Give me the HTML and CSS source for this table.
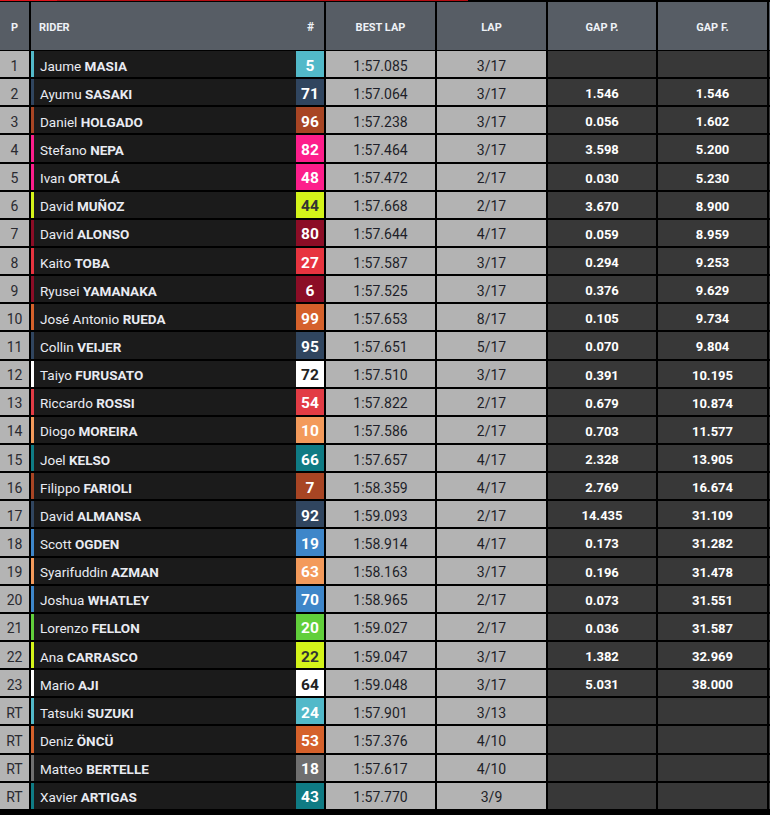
FILE: index.html
```html
<!DOCTYPE html>
<html>
<head>
<meta charset="utf-8">
<link rel="stylesheet" href="styles.css">
</head>
<body>
<div class="board">
  <div class="topline"><span class="seg-a"></span><span class="seg-b"></span></div>
  <div class="row head">
    <div class="c pos">P</div>
    <div class="c hrider"><span class="label">RIDER</span><span class="hash">#</span></div>
    <div class="c">BEST LAP</div>
    <div class="c">LAP</div>
    <div class="c">GAP P.</div>
    <div class="c">GAP F.</div>
    <div class="c"></div>
  </div>
  <div class="rows">
    <div class="row"><div class="c pos">1</div><div class="c rider cyan"><span class="name">Jaume <b>MASIA</b></span><span class="num">5</span></div><div class="c lt">1:57.085</div><div class="c lt">3/17</div><div class="c gp"></div><div class="c gp"></div><div class="c gp"></div></div>
    <div class="row"><div class="c pos">2</div><div class="c rider navy"><span class="name">Ayumu <b>SASAKI</b></span><span class="num">71</span></div><div class="c lt">1:57.064</div><div class="c lt">3/17</div><div class="c gp">1.546</div><div class="c gp">1.546</div><div class="c gp"></div></div>
    <div class="row"><div class="c pos">3</div><div class="c rider rust"><span class="name">Daniel <b>HOLGADO</b></span><span class="num">96</span></div><div class="c lt">1:57.238</div><div class="c lt">3/17</div><div class="c gp">0.056</div><div class="c gp">1.602</div><div class="c gp"></div></div>
    <div class="row"><div class="c pos">4</div><div class="c rider pink"><span class="name">Stefano <b>NEPA</b></span><span class="num">82</span></div><div class="c lt">1:57.464</div><div class="c lt">3/17</div><div class="c gp">3.598</div><div class="c gp">5.200</div><div class="c gp"></div></div>
    <div class="row"><div class="c pos">5</div><div class="c rider pink"><span class="name">Ivan <b>ORTOLÁ</b></span><span class="num">48</span></div><div class="c lt">1:57.472</div><div class="c lt">2/17</div><div class="c gp">0.030</div><div class="c gp">5.230</div><div class="c gp"></div></div>
    <div class="row"><div class="c pos">6</div><div class="c rider lime"><span class="name">David <b>MUÑOZ</b></span><span class="num">44</span></div><div class="c lt">1:57.668</div><div class="c lt">2/17</div><div class="c gp">3.670</div><div class="c gp">8.900</div><div class="c gp"></div></div>
    <div class="row"><div class="c pos">7</div><div class="c rider wine"><span class="name">David <b>ALONSO</b></span><span class="num">80</span></div><div class="c lt">1:57.644</div><div class="c lt">4/17</div><div class="c gp">0.059</div><div class="c gp">8.959</div><div class="c gp"></div></div>
    <div class="row"><div class="c pos">8</div><div class="c rider red"><span class="name">Kaito <b>TOBA</b></span><span class="num">27</span></div><div class="c lt">1:57.587</div><div class="c lt">3/17</div><div class="c gp">0.294</div><div class="c gp">9.253</div><div class="c gp"></div></div>
    <div class="row"><div class="c pos">9</div><div class="c rider wine"><span class="name">Ryusei <b>YAMANAKA</b></span><span class="num">6</span></div><div class="c lt">1:57.525</div><div class="c lt">3/17</div><div class="c gp">0.376</div><div class="c gp">9.629</div><div class="c gp"></div></div>
    <div class="row"><div class="c pos">10</div><div class="c rider orange"><span class="name">José Antonio <b>RUEDA</b></span><span class="num">99</span></div><div class="c lt">1:57.653</div><div class="c lt">8/17</div><div class="c gp">0.105</div><div class="c gp">9.734</div><div class="c gp"></div></div>
    <div class="row"><div class="c pos">11</div><div class="c rider navy"><span class="name">Collin <b>VEIJER</b></span><span class="num">95</span></div><div class="c lt">1:57.651</div><div class="c lt">5/17</div><div class="c gp">0.070</div><div class="c gp">9.804</div><div class="c gp"></div></div>
    <div class="row"><div class="c pos">12</div><div class="c rider white"><span class="name">Taiyo <b>FURUSATO</b></span><span class="num">72</span></div><div class="c lt">1:57.510</div><div class="c lt">3/17</div><div class="c gp">0.391</div><div class="c gp">10.195</div><div class="c gp"></div></div>
    <div class="row"><div class="c pos">13</div><div class="c rider red2"><span class="name">Riccardo <b>ROSSI</b></span><span class="num">54</span></div><div class="c lt">1:57.822</div><div class="c lt">2/17</div><div class="c gp">0.679</div><div class="c gp">10.874</div><div class="c gp"></div></div>
    <div class="row"><div class="c pos">14</div><div class="c rider peach"><span class="name">Diogo <b>MOREIRA</b></span><span class="num">10</span></div><div class="c lt">1:57.586</div><div class="c lt">2/17</div><div class="c gp">0.703</div><div class="c gp">11.577</div><div class="c gp"></div></div>
    <div class="row"><div class="c pos">15</div><div class="c rider teal"><span class="name">Joel <b>KELSO</b></span><span class="num">66</span></div><div class="c lt">1:57.657</div><div class="c lt">4/17</div><div class="c gp">2.328</div><div class="c gp">13.905</div><div class="c gp"></div></div>
    <div class="row"><div class="c pos">16</div><div class="c rider rust"><span class="name">Filippo <b>FARIOLI</b></span><span class="num">7</span></div><div class="c lt">1:58.359</div><div class="c lt">4/17</div><div class="c gp">2.769</div><div class="c gp">16.674</div><div class="c gp"></div></div>
    <div class="row"><div class="c pos">17</div><div class="c rider navy"><span class="name">David <b>ALMANSA</b></span><span class="num">92</span></div><div class="c lt">1:59.093</div><div class="c lt">2/17</div><div class="c gp">14.435</div><div class="c gp">31.109</div><div class="c gp"></div></div>
    <div class="row"><div class="c pos">18</div><div class="c rider blue"><span class="name">Scott <b>OGDEN</b></span><span class="num">19</span></div><div class="c lt">1:58.914</div><div class="c lt">4/17</div><div class="c gp">0.173</div><div class="c gp">31.282</div><div class="c gp"></div></div>
    <div class="row"><div class="c pos">19</div><div class="c rider peach"><span class="name">Syarifuddin <b>AZMAN</b></span><span class="num">63</span></div><div class="c lt">1:58.163</div><div class="c lt">3/17</div><div class="c gp">0.196</div><div class="c gp">31.478</div><div class="c gp"></div></div>
    <div class="row"><div class="c pos">20</div><div class="c rider blue"><span class="name">Joshua <b>WHATLEY</b></span><span class="num">70</span></div><div class="c lt">1:58.965</div><div class="c lt">2/17</div><div class="c gp">0.073</div><div class="c gp">31.551</div><div class="c gp"></div></div>
    <div class="row"><div class="c pos">21</div><div class="c rider green"><span class="name">Lorenzo <b>FELLON</b></span><span class="num">20</span></div><div class="c lt">1:59.027</div><div class="c lt">2/17</div><div class="c gp">0.036</div><div class="c gp">31.587</div><div class="c gp"></div></div>
    <div class="row"><div class="c pos">22</div><div class="c rider lime"><span class="name">Ana <b>CARRASCO</b></span><span class="num">22</span></div><div class="c lt">1:59.047</div><div class="c lt">3/17</div><div class="c gp">1.382</div><div class="c gp">32.969</div><div class="c gp"></div></div>
    <div class="row"><div class="c pos">23</div><div class="c rider white"><span class="name">Mario <b>AJI</b></span><span class="num">64</span></div><div class="c lt">1:59.048</div><div class="c lt">3/17</div><div class="c gp">5.031</div><div class="c gp">38.000</div><div class="c gp"></div></div>
    <div class="row"><div class="c pos">RT</div><div class="c rider cyan"><span class="name">Tatsuki <b>SUZUKI</b></span><span class="num">24</span></div><div class="c lt">1:57.901</div><div class="c lt">3/13</div><div class="c gp"></div><div class="c gp"></div><div class="c gp"></div></div>
    <div class="row"><div class="c pos">RT</div><div class="c rider orange"><span class="name">Deniz <b>ÖNCÜ</b></span><span class="num">53</span></div><div class="c lt">1:57.376</div><div class="c lt">4/10</div><div class="c gp"></div><div class="c gp"></div><div class="c gp"></div></div>
    <div class="row"><div class="c pos">RT</div><div class="c rider grey"><span class="name">Matteo <b>BERTELLE</b></span><span class="num">18</span></div><div class="c lt">1:57.617</div><div class="c lt">4/10</div><div class="c gp"></div><div class="c gp"></div><div class="c gp"></div></div>
    <div class="row"><div class="c pos">RT</div><div class="c rider teal"><span class="name">Xavier <b>ARTIGAS</b></span><span class="num">43</span></div><div class="c lt">1:57.770</div><div class="c lt">3/9</div><div class="c gp"></div><div class="c gp"></div><div class="c gp"></div></div>
  </div>
</div>
</body>
</html>
```

FILE: styles.css
```css
html, body {
  margin: 0;
  padding: 0;
  background: #000;
}
body {
  width: 770px;
  height: 815px;
  overflow: hidden;
  font-family: Roboto, "Liberation Sans", sans-serif;
}
.board {
  display: flex;
  flex-direction: column;
  width: 770px;
}
.topline {
  display: flex;
  height: 1px;
  margin-bottom: 1px;
}
.seg-a { width: 57px; background: #e0141b; }
.seg-b { width: 411px; background: #b50d12; }

.row {
  display: grid;
  grid-template-columns: 29px 293px 109px 109px 108px 109px 10px;
  column-gap: 2px;
  height: 26.15px;
}
.rows {
  display: flex;
  flex-direction: column;
  gap: 2px;
}
.c {
  display: flex;
  align-items: center;
  justify-content: center;
  font-size: 13px;
  overflow: hidden;
  padding-top: 3px;
  box-sizing: border-box;
}
.head {
  height: 48px;
  margin-bottom: 1px;
}
.head .c {
  background: #575d65;
  color: #eef1f6;
  font-size: 11px;
  font-weight: 700;
  padding-top: 2px;
}
.head .hrider {
  justify-content: space-between;
  padding: 2px 10px 0 8px;
}
.head .hash { font-size: 12px; }

.pos {
  background: #b4b4b4;
  color: #2a2a30;
  font-size: 14px;
}
.rider {
  justify-content: space-between;
  background: #1b1b1b;
  color: #e9ebf2;
  border-left: 3px solid var(--tc);
  align-items: stretch;
  font-size: 13.5px;
  padding-top: 0;
}
.rider .name {
  display: flex;
  align-items: center;
  padding-left: 6px;
  padding-top: 3px;
  white-space: pre;
}
.rider .name b { font-weight: 700; }
.num {
  width: 28px;
  display: flex;
  align-items: center;
  justify-content: center;
  background: var(--tc);
  color: #fff;
  font-size: 15.5px;
  font-weight: 700;
  padding-top: 3px;
  box-sizing: border-box;
}
.lt {
  background: #b3b3b3;
  color: #1e1f29;
  font-size: 14px;
}
.gp {
  background: #383838;
  color: #fff;
  font-weight: 700;
}

.cyan { --tc: #52b9c9; }
.navy { --tc: #30455f; }
.rust { --tc: #a84524; }
.pink { --tc: #fd1e8b; }
.lime { --tc: #d4f41a; }
.lime .num { color: #333; }
.wine { --tc: #8c0d26; }
.red { --tc: #e7343f; }
.red2 { --tc: #e23c45; }
.orange { --tc: #d5612b; }
.white { --tc: #ffffff; }
.white .num { color: #222; }
.peach { --tc: #f39a5b; }
.teal { --tc: #0f7b84; }
.blue { --tc: #3e86c9; }
.green { --tc: #61cf3b; }
.grey { --tc: #6f6f6f; }
```
